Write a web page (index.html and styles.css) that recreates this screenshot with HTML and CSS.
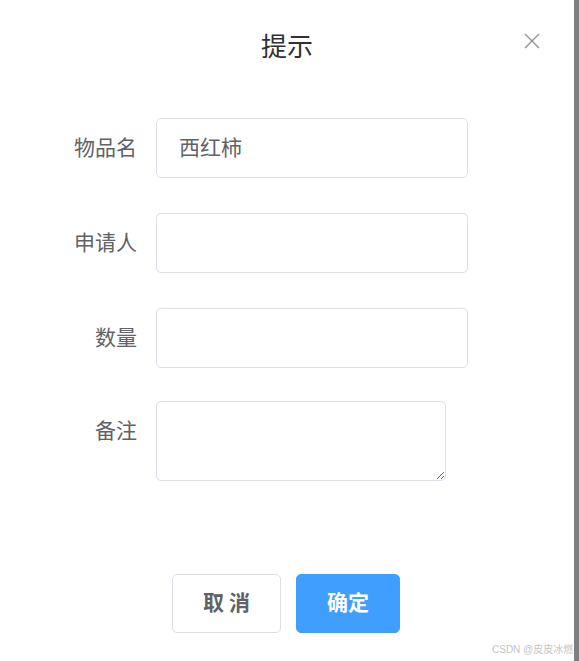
FILE: index.html
```html
<!DOCTYPE html>
<html lang="zh">
<head>
<meta charset="utf-8">
<title>提示</title>
<link rel="stylesheet" href="styles.css">
</head>
<body>
<div class="page">
  <div class="dialog">
    <div class="header">
      <span class="title">提示</span>
      <button class="close" aria-label="关闭">
        <svg width="16" height="16" viewBox="0 0 16 16"><path d="M1 1 L15 15 M15 1 L1 15" stroke="#909399" stroke-width="1.4" fill="none"/></svg>
      </button>
    </div>
    <form class="form">
      <div class="row">
        <label class="label">物品名</label>
        <input class="input" type="text" value="西红柿">
      </div>
      <div class="row">
        <label class="label">申请人</label>
        <input class="input" type="text" value="">
      </div>
      <div class="row">
        <label class="label">数量</label>
        <input class="input" type="text" value="">
      </div>
      <div class="row row-area">
        <label class="label">备注</label>
        <textarea class="textarea"></textarea>
      </div>
    </form>
    <div class="footer">
      <button class="btn btn-cancel" type="button">取 消</button>
      <button class="btn btn-ok" type="button">确定</button>
    </div>
    <div class="watermark">CSDN @皮皮冰燃</div>
  </div>
  <div class="strip"></div>
</div>
</body>
</html>
```
FILE: styles.css
```css
html, body {
  margin: 0;
  padding: 0;
  background: #ffffff;
  font-family: "Noto Sans CJK SC", "Noto Sans", sans-serif;
}
.page {
  display: flex;
  width: 579px;
  height: 661px;
  overflow: hidden;
}
.dialog {
  position: relative;
  width: 574px;
  height: 661px;
  background: #ffffff;
  display: flex;
  flex-direction: column;
}
.strip {
  width: 5px;
  height: 661px;
  background: #7f7f7f;
}
.header {
  padding-top: 27px;
  height: 37px;
  text-align: center;
}
.title {
  font-size: 26px;
  line-height: 36px;
  color: #303133;
}
.close {
  position: absolute;
  top: 33px;
  left: 524px;
  width: 16px;
  height: 16px;
  padding: 0;
  border: 0;
  background: transparent;
  display: block;
}
.close svg { display: block; }
.form {
  margin-top: 54px;
  display: flex;
  flex-direction: column;
  gap: 35px;
}
.row {
  display: flex;
  align-items: flex-start;
}
.row-area {
  margin-top: -2px;
}
.label {
  width: 137px;
  margin-right: 19px;
  text-align: right;
  font-size: 21px;
  line-height: 56px;
  padding-bottom: 4px;
  color: #606266;
}
.input {
  box-sizing: border-box;
  width: 312px;
  height: 60px;
  border: 1px solid #dcdfe6;
  border-radius: 5px;
  padding: 0 0 5px 22px;
  font-family: inherit;
  font-size: 21px;
  color: #606266;
  outline: none;
  margin: 0;
}
.textarea {
  box-sizing: border-box;
  width: 290px;
  height: 80px;
  border: 1px solid #dcdfe6;
  border-radius: 5px;
  padding: 8px 15px;
  font-family: inherit;
  font-size: 21px;
  color: #606266;
  outline: none;
  margin: 0;
  resize: both;
}
.footer {
  margin-top: 93px;
  display: flex;
  justify-content: center;
  gap: 15px;
  padding-right: 2px;
}
.btn {
  box-sizing: border-box;
  height: 59px;
  border-radius: 5px;
  font-family: inherit;
  font-size: 21px;
  font-weight: 700;
  padding: 0 0 5px 0;
  margin: 0;
}
.btn-cancel {
  width: 109px;
  background: #ffffff;
  border: 1px solid #dcdfe6;
  color: #606266;
}
.btn-ok {
  width: 104px;
  background: #409eff;
  border: 1px solid #409eff;
  color: #ffffff;
}
.watermark {
  position: absolute;
  left: 492px;
  top: 643px;
  font-family: "Liberation Sans", "Noto Sans CJK SC", sans-serif;
  font-size: 10px;
  line-height: 13px;
  color: #c4c4c4;
  white-space: nowrap;
}
```
